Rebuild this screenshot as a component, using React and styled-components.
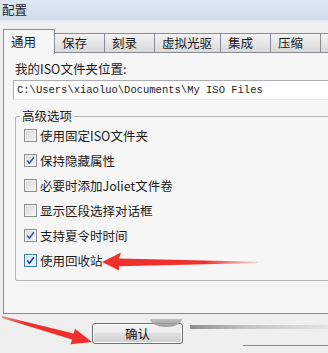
import React from 'react'
import styled, { createGlobalStyle } from 'styled-components'

const GlobalStyle = createGlobalStyle`
  body {
    margin: 0;
    background: #efefef;
  }
  * {
    box-sizing: border-box;
  }
`

const Window = styled.div`
  position: relative;
  width: 328px;
  height: 353px;
  overflow: hidden;
  background: #efefef;
  font-family: 'Noto Sans CJK SC', 'Noto Sans', sans-serif;
  font-size: 12.5px;
  color: #1a1a1a;
`

const TitleBar = styled.div`
  height: 20px;
  display: flex;
  align-items: center;
  padding-left: 2px;
  background: linear-gradient(#dfe8f2, #cddbea);
  color: #1b2532;
  line-height: 16px;
`

const TabStrip = styled.div`
  display: flex;
  align-items: flex-end;
  height: 33px;
  padding: 9px 0 0 3px;
  background: linear-gradient(#e8edf2, #efefef 6px);
  position: relative;
  z-index: 2;
  white-space: nowrap;
`

const Tab = styled.div`
  flex: none;
  min-width: ${p => (p.$active ? '52px' : '51px')};
  height: ${p => (p.$active ? '25px' : '20px')};
  margin-left: ${p => (p.$active ? '0' : '-1px')};
  margin-bottom: ${p => (p.$active ? '-1px' : '0')};
  padding: ${p => (p.$active ? '3px 8px 0 7px' : '0 8px 0 7px')};
  border: 1px solid #898c95;
  border-bottom: ${p => (p.$active ? 'none' : '1px solid #898c95')};
  background: ${p =>
    p.$active ? '#f6f6f6' : 'linear-gradient(#f3f3f3, #e6e6e6 50%, #d9d9d9)'};
  line-height: ${p => (p.$active ? '17px' : '18px')};
  position: relative;
  z-index: ${p => (p.$active ? 2 : 1)};
`

const Panel = styled.div`
  margin: -1px -20px 0 3px;
  padding: 8px 0 32px 9px;
  border: 1px solid #898c95;
  background: #f6f6f6;
`

const FieldLabel = styled.div`
  padding-left: 2px;
  line-height: 16px;
`

const PathInput = styled.input`
  display: block;
  width: 100%;
  height: 20px;
  margin-top: 3px;
  padding: 0 0 0 3px;
  border: 1px solid #abadb3;
  border-right-color: #e3e9ef;
  border-bottom-color: #e3e9ef;
  border-radius: 0;
  background: #fff;
  font-family: 'Liberation Mono', 'DejaVu Sans Mono', monospace;
  font-size: 10.5px;
  color: #1a1a1a;
  outline: none;
`

const GroupBox = styled.fieldset`
  margin: 8px -10px 0 2px;
  padding: 0 0 7px 8px;
  min-width: 0;
  border: 1px solid #b4b4b4;
  border-radius: 2px;
`

const GroupTitle = styled.legend`
  margin-left: -4px;
  padding: 0 2px;
  line-height: 16px;
`

const OptionList = styled.div`
  margin-top: -1px;
  display: flex;
  flex-direction: column;
`

const Option = styled.label`
  display: flex;
  align-items: center;
  gap: 3px;
  height: 25px;
  line-height: 16px;
`

const Box = styled.span`
  flex: none;
  width: 13px;
  height: 13px;
  display: flex;
  align-items: center;
  justify-content: center;
  border: 1px solid ${p => (p.$hot ? '#3c7fb1' : '#8e8f8f')};
  background: ${p =>
    p.$hot
      ? 'linear-gradient(135deg, #cfe6f6, #f4faff)'
      : 'linear-gradient(135deg, #d6d6d6, #f7f7f7)'};
  box-shadow: inset 0 0 0 1px ${p => (p.$hot ? '#e8f4fc' : '#f1f1f1')};

  svg {
    display: block;
  }
`

const Footer = styled.div`
  position: relative;
  display: flex;
  align-items: flex-start;
  padding: 9px 0 0 92px;
`

const Button = styled.button`
  flex: none;
  width: 91px;
  height: 21px;
  padding: 0;
  border: 1px solid #707070;
  border-radius: 3px;
  background: linear-gradient(#f2f2f2, #ebebeb 50%, #dddddd 50%, #cfcfcf);
  box-shadow: inset 0 0 0 1px #fbfbfb;
  font-family: inherit;
  font-size: 12.5px;
  line-height: 16px;
  color: #111;
`

const Smudge = styled.div`
  position: absolute;
  left: 150px;
  top: 5px;
  width: 32px;
  height: 8px;
  border-radius: 0 0 16px 16px / 0 0 8px 8px;
  background: linear-gradient(#b4b4b4, #8f8f8f);
  opacity: 0.85;
`

const GhostButton = styled.div`
  flex: 1;
  display: flex;
  flex-direction: column;
  height: 23px;
  margin-left: 7px;
`

const GhostTop = styled.div`
  height: 4px;
  margin-top: 2px;
  background: linear-gradient(to right, #8e8e8e, #c4c4c4 40%, #e2e2e2);
`

const GhostBottom = styled.div`
  height: 1px;
  margin: auto 0 0 53px;
  background: #8a8a8a;
`

const Annotations = styled.svg`
  position: absolute;
  left: 0;
  top: 0;
  pointer-events: none;
  z-index: 10;
`

const tabs = ['通用', '保存', '刻录', '虚拟光驱', '集成', '压缩', '高级']

const options = [
  { text: '使用固定ISO文件夹', checked: false },
  { text: '保持隐藏属性', checked: true },
  { text: '必要时添加Joliet文件卷', checked: false },
  { text: '显示区段选择对话框', checked: false },
  { text: '支持夏令时时间', checked: true },
  { text: '使用回收站', checked: true, hot: true },
]

const Check = ({ hot }) => (
  <svg width="9" height="9" viewBox="0 0 9 9">
    <path
      d="M1.2 4.6 L3.4 7.2 L7.9 1.2"
      fill="none"
      stroke={hot ? '#1d3f96' : '#3b56a6'}
      strokeWidth="1.6"
    />
  </svg>
)

const App = () => {
  return (
    <Window>
      <GlobalStyle />
      <TitleBar>配置</TitleBar>
      <TabStrip>
        {tabs.map((t, i) => (
          <Tab key={t} $active={i === 0}>{t}</Tab>
        ))}
      </TabStrip>
      <Panel>
        <FieldLabel>我的ISO文件夹位置:</FieldLabel>
        <PathInput readOnly value={'C:\\Users\\xiaoluo\\Documents\\My ISO Files'} />
        <GroupBox>
          <GroupTitle>高级选项</GroupTitle>
          <OptionList>
            {options.map(o => (
              <Option key={o.text}>
                <Box $hot={o.hot}>{o.checked ? <Check hot={o.hot} /> : null}</Box>
                {o.text}
              </Option>
            ))}
          </OptionList>
        </GroupBox>
      </Panel>
      <Footer>
        <Button>确认</Button>
        <Smudge />
        <GhostButton>
          <GhostTop />
          <GhostBottom />
        </GhostButton>
      </Footer>

      <Annotations width="328" height="353" viewBox="0 0 328 353">
        <defs>
          <linearGradient id="fadeLeft" x1="102" y1="0" x2="258" y2="0" gradientUnits="userSpaceOnUse">
            <stop offset="0" stopColor="#f0302c" />
            <stop offset="0.65" stopColor="#f0302c" />
            <stop offset="1" stopColor="#f0302c" stopOpacity="0.15" />
          </linearGradient>
          <linearGradient id="fadeDown" x1="92" y1="342" x2="2" y2="317" gradientUnits="userSpaceOnUse">
            <stop offset="0" stopColor="#f0302c" />
            <stop offset="0.75" stopColor="#f0302c" />
            <stop offset="1" stopColor="#f0302c" stopOpacity="0.5" />
          </linearGradient>
        </defs>
        <polygon
          points="102,262 121,252.5 119,258.5 258,261.8 258,263 119,266.2 119,270.5"
          fill="url(#fadeLeft)"
        />
        <polygon
          points="92,342 75,328.8 73.6,333.6 2,316 2,318 72,339.4 70.6,344.2"
          fill="url(#fadeDown)"
        />
      </Annotations>
    </Window>
  )
}

export default App
